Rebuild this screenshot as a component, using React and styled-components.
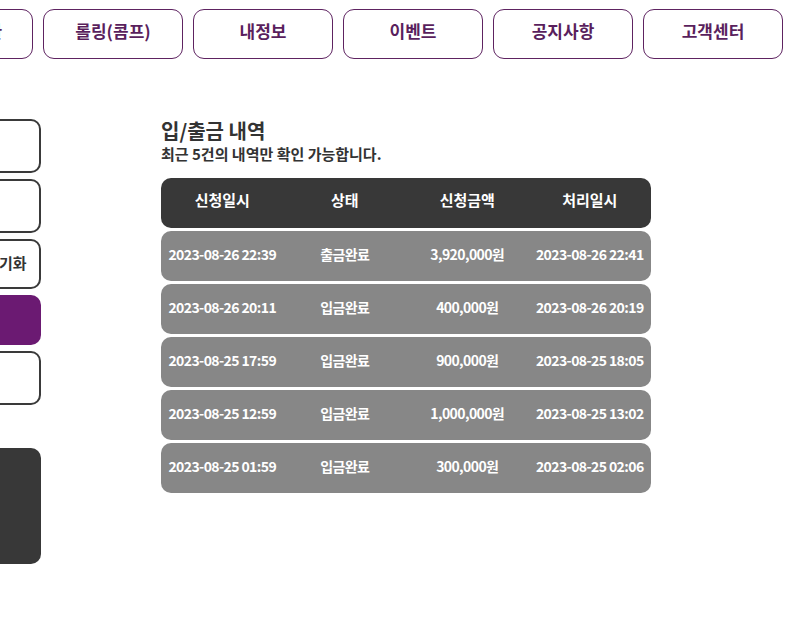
import React from "react";
import styled, { createGlobalStyle } from "styled-components";

const GlobalStyle = createGlobalStyle`
  html, body {
    margin: 0;
    padding: 0;
    background: #ffffff;
    overflow: hidden;
  }
  body {
    font-family: "Noto Sans CJK KR", "Noto Sans", sans-serif;
    color: #333333;
  }
`;

const menus = ["포인트전환", "롤링(콤프)", "내정보", "이벤트", "공지사항", "고객센터"];

const sideMenus = [
  { label: "입금신청", height: 54 },
  { label: "출금신청", height: 54 },
  { label: "베팅내역 전체 초기화", height: 50 },
  { label: "입/출금 내역", height: 50, active: true },
  { label: "쪽지함", height: 54 },
];

const history = [
  { requested: "2023-08-26 22:39", status: "출금완료", amount: "3,920,000원", processed: "2023-08-26 22:41" },
  { requested: "2023-08-26 20:11", status: "입금완료", amount: "400,000원", processed: "2023-08-26 20:19" },
  { requested: "2023-08-25 17:59", status: "입금완료", amount: "900,000원", processed: "2023-08-25 18:05" },
  { requested: "2023-08-25 12:59", status: "입금완료", amount: "1,000,000원", processed: "2023-08-25 13:02" },
  { requested: "2023-08-25 01:59", status: "입금완료", amount: "300,000원", processed: "2023-08-25 02:06" },
];

const App = () => {
  return (
    <Page>
      <GlobalStyle />
      <TopNav>
        {menus.map((m) => (
          <NavButton key={m}>{m}</NavButton>
        ))}
      </TopNav>

      <Body>
        <Sidebar>
          {sideMenus.map((s) => (
            <SideButton key={s.label} h={s.height} active={s.active}>
              {s.label}
            </SideButton>
          ))}
          <SideBanner />
        </Sidebar>

        <Content>
          <Title>입/출금 내역</Title>
          <SubTitle>최근 5건의 내역만 확인 가능합니다.</SubTitle>

          <Table>
            <HeaderRow>
              <Cell>신청일시</Cell>
              <Cell>상태</Cell>
              <Cell>신청금액</Cell>
              <Cell>처리일시</Cell>
            </HeaderRow>
            {history.map((row, i) => (
              <DataRow key={i}>
                <Cell>{row.requested}</Cell>
                <Cell>{row.status}</Cell>
                <Cell>{row.amount}</Cell>
                <Cell>{row.processed}</Cell>
              </DataRow>
            ))}
          </Table>
        </Content>
      </Body>
    </Page>
  );
};

export default App;

const Page = styled.div`
  width: 803px;
  height: 632px;
  overflow: hidden;
`;

const TopNav = styled.nav`
  display: flex;
  gap: 10px;
  padding-top: 9px;
  margin-left: -107px;
`;

const NavButton = styled.button`
  flex: 0 0 140px;
  height: 50px;
  padding: 0 0 7px;
  background: #ffffff;
  border: 1px solid #5e2361;
  border-radius: 11px;
  font-family: "Noto Sans CJK KR", sans-serif;
  font-size: 17px;
  font-weight: 700;
  color: #5a1f5d;
  cursor: pointer;
`;

const Body = styled.div`
  display: flex;
  align-items: flex-start;
  margin-top: 60px;
`;

const Sidebar = styled.aside`
  flex: 0 0 160px;
  margin-left: -119px;
  display: flex;
  flex-direction: column;
  gap: 6px;
`;

const SideButton = styled.div`
  height: ${(p) => p.h}px;
  box-sizing: border-box;
  display: flex;
  align-items: center;
  justify-content: center;
  padding-bottom: 3px;
  border: ${(p) => (p.active ? "none" : "2px solid #3a3a3a")};
  background: ${(p) => (p.active ? "#6b1a72" : "#ffffff")};
  border-radius: 10px;
  font-size: 15px;
  font-weight: 700;
  color: ${(p) => (p.active ? "#ffffff" : "#333333")};
  white-space: nowrap;
`;

const SideBanner = styled.div`
  height: 116px;
  margin-top: 37px;
  background: #383838;
  border-radius: 10px;
`;

const Content = styled.main`
  margin-left: 120px;
  width: 490px;
  display: flex;
  flex-direction: column;
`;

const Title = styled.h2`
  margin: 0;
  font-size: 20px;
  line-height: 24px;
  font-weight: 700;
  color: #333333;
  letter-spacing: 0;
`;

const SubTitle = styled.p`
  margin: 1px 0 0;
  font-size: 15px;
  line-height: 20px;
  font-weight: 700;
  color: #333333;
  letter-spacing: 0;
`;

const Table = styled.div`
  margin-top: 14px;
  display: flex;
  flex-direction: column;
  gap: 3px;
`;

const Row = styled.div`
  display: grid;
  grid-template-columns: repeat(4, 1fr);
  align-items: center;
  box-sizing: border-box;
  height: 50px;
  border-radius: 10px;
  color: #ffffff;
`;

const HeaderRow = styled(Row)`
  padding-bottom: 7px;
  background: #383838;
  font-size: 15px;
  font-weight: 700;
`;

const DataRow = styled(Row)`
  padding-bottom: 5px;
  background: #878787;
  font-size: 14px;
  font-weight: 700;
  letter-spacing: -0.6px;
`;

const Cell = styled.div`
  text-align: center;
  white-space: nowrap;
`;
